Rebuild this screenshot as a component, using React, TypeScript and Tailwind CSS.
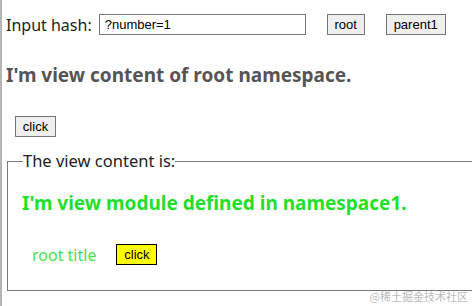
import React from "react";

export default function App() {
  return (
    <div className="h-[306px] w-[472px] overflow-hidden bg-white border-l-2 border-[#b5b5b5] relative" style={{ fontFamily: '"Noto Sans", "Open Sans", sans-serif' }}>
      <div className="flex items-center pt-[14px] h-[35px]">
        <span className="ml-[4px] text-[16px] text-[#222] leading-none">Input hash:</span>
        <input
          defaultValue="?number=1"
          className="ml-[7px] w-[207px] h-[21px] border border-[#767676] px-[5px] text-[13px] text-black outline-none"
          style={{ fontFamily: '"Liberation Sans", Arial, sans-serif' }}
        />
        <button className="ml-[21px] w-[38px] h-[21px] border border-[#767676] bg-[#efefef] text-[13px] text-black" style={{ fontFamily: '"Liberation Sans", Arial, sans-serif' }}>root</button>
        <button className="ml-[21px] w-[60px] h-[21px] border border-[#767676] bg-[#efefef] text-[13px] text-black" style={{ fontFamily: '"Liberation Sans", Arial, sans-serif' }}>parent1</button>
      </div>
      <h2 className="mt-[28px] ml-[4px] text-[19px] font-bold text-[#555] leading-[24px]">I'm view content of root namespace.</h2>
      <button className="mt-[29px] ml-[13px] w-[41px] h-[21px] border border-[#767676] bg-[#efefef] text-[13px] text-black block" style={{ fontFamily: '"Liberation Sans", Arial, sans-serif' }}>click</button>
      <fieldset className="mt-[14px] ml-[5px] w-[480px] h-[140px] border border-[#777] pl-[14px] pr-0 pt-0">
        <legend className="ml-[1px] text-[16.5px] text-[#222] leading-[20px] px-0">The view content is:</legend>
        <h2 className="mt-[20px] text-[19px] font-bold text-[#22e02a] leading-[24px]">I'm view module defined in namespace1.</h2>
        <div className="flex items-center mt-[29px]">
          <span className="ml-[10px] text-[16px] text-[#4be04b] leading-none">root title</span>
          <button className="ml-[20px] w-[41px] h-[21px] border border-black bg-[#ffff00] text-[13px] text-black" style={{ fontFamily: '"Liberation Sans", Arial, sans-serif' }}>click</button>
        </div>
      </fieldset>
      <div className="absolute right-[4px] bottom-[4px] text-[11px] text-[#bbb] leading-none" style={{ fontFamily: '"Noto Sans CJK SC", sans-serif' }}>@稀土掘金技术社区</div>
    </div>
  );
}
